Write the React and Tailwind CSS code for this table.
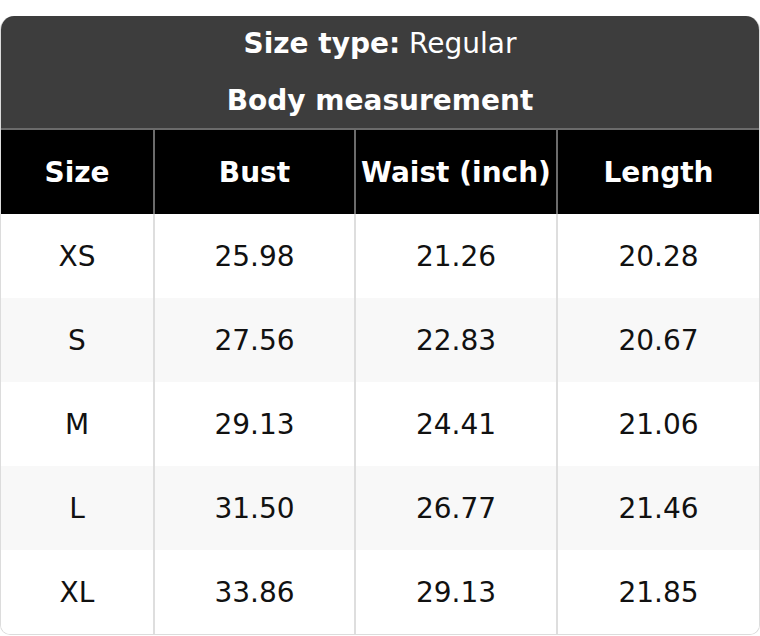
const rows = [
  ['XS', '25.98', '21.26', '20.28'],
  ['S', '27.56', '22.83', '20.67'],
  ['M', '29.13', '24.41', '21.06'],
  ['L', '31.50', '26.77', '21.46'],
  ['XL', '33.86', '29.13', '21.85'],
]

const cols = ['Size', 'Bust', 'Waist (inch)', 'Length']

export default function App() {
  return (
    <div className="bg-white pt-4 text-[28px]" style={{ fontFamily: '"DejaVu Sans", Verdana, sans-serif' }}>
      <div className="overflow-hidden rounded-t-[14px] rounded-b-[10px] border border-[#dcdcdc] border-t-0">
        <div className="bg-[#3d3d3d] text-center text-white border-b-2 border-[#6b6b6b]">
          <div className="h-[56px] leading-[56px]">
            <span className="font-bold">Size type:</span> Regular
          </div>
          <div className="h-[56px] leading-[58px] font-bold">Body measurement</div>
        </div>
        <table className="w-full table-fixed border-collapse">
          <colgroup>
            <col className="w-[153px]" />
            <col className="w-[201px]" />
            <col className="w-[202px]" />
            <col />
          </colgroup>
          <thead>
            <tr className="bg-black text-white">
              {cols.map((c, i) => (
                <th
                  key={c}
                  className={`h-[84px] p-0 pt-[2px] font-bold text-center whitespace-nowrap ${i > 0 ? 'border-l-2 border-[#6b6b6b]' : ''}`}
                >
                  {c}
                </th>
              ))}
            </tr>
          </thead>
          <tbody>
            {rows.map((r, ri) => (
              <tr key={r[0]} className={ri % 2 ? 'bg-[#f8f8f8]' : 'bg-white'}>
                {r.map((v, i) => (
                  <td
                    key={i}
                    className={`h-[84px] p-0 pt-[2px] text-center text-[#111] ${i > 0 ? 'border-l-2 border-[#dedede]' : ''}`}
                  >
                    {v}
                  </td>
                ))}
              </tr>
            ))}
          </tbody>
        </table>
      </div>
    </div>
  )
}
